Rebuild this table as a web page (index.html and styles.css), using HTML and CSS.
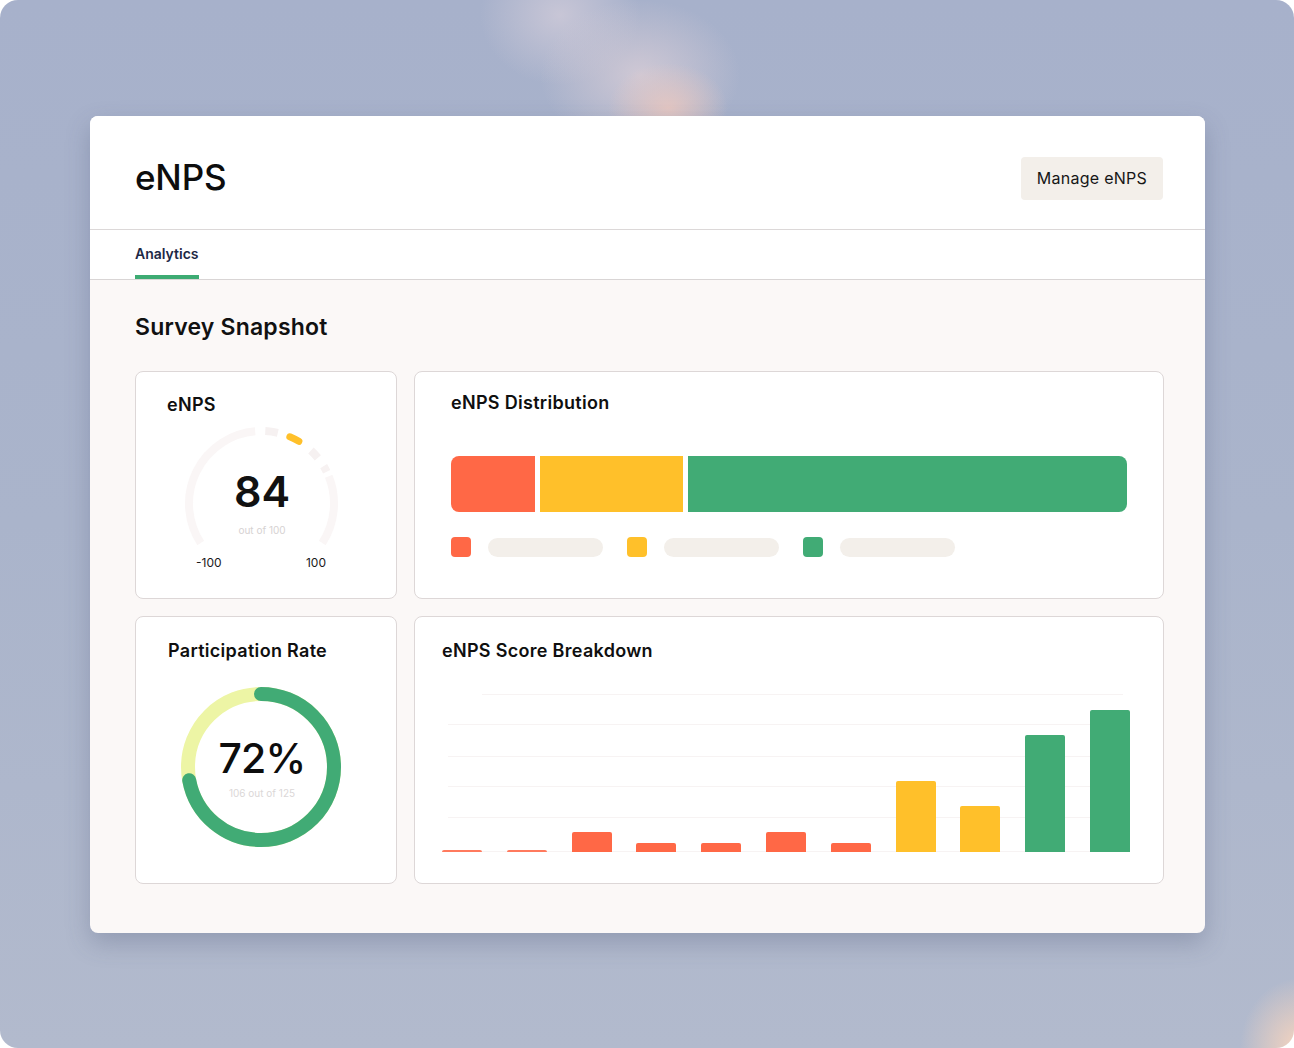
FILE: index.html
```html
<!DOCTYPE html>
<html>
<head>
<meta charset="utf-8">
<link rel="stylesheet" href="styles.css">
</head>
<body>
<div class="frame">
  <div class="panel">
    <header class="header">
      <h1 class="title">eNPS</h1>
      <button class="btn">Manage eNPS</button>
    </header>
    <nav class="tabs">
      <div class="tab active">Analytics</div>
    </nav>
    <main class="content">
      <h2 class="section-title">Survey Snapshot</h2>
      <div class="grid">
        <section class="card card-enps">
          <h3 class="card-title">eNPS</h3>
          <div class="gauge">
            <svg class="gauge-svg" width="190" height="130" viewBox="0 0 190 130">
              <path d="M33.7 120.98 A72.5 72.5 0 0 1 88.18 9.28" fill="none" stroke="#faf6f6" stroke-width="8"/>
              <path d="M98.29 9.10 A72.5 72.5 0 0 1 110.81 10.86" fill="none" stroke="#f6f1f1" stroke-width="8"/>
              <path d="M143.95 28.47 A72.5 72.5 0 0 1 150.84 35.88" fill="none" stroke="#f6f1f1" stroke-width="8"/>
              <path d="M156.65 44.16 A72.5 72.5 0 0 1 159.66 49.72" fill="none" stroke="#f7f2f2" stroke-width="8"/>
              <path d="M161.72 54.34 A72.5 72.5 0 0 1 155.3 120.98" fill="none" stroke="#faf6f6" stroke-width="8"/>
              <path d="M122.83 14.76 A72.5 72.5 0 0 1 131.84 19.35" fill="none" stroke="#ffc02a" stroke-width="7" stroke-linecap="round"/>
            </svg>
            <div class="gauge-value">84</div>
            <div class="gauge-sub">out of 100</div>
            <div class="gauge-labels"><span>-100</span><span>100</span></div>
          </div>
        </section>

        <section class="card card-dist">
          <h3 class="card-title">eNPS Distribution</h3>
          <div class="dist-bar">
            <div class="seg seg-red"></div>
            <div class="seg seg-yellow"></div>
            <div class="seg seg-green"></div>
          </div>
          <div class="legend">
            <div class="legend-item"><span class="swatch red"></span><span class="pill"></span></div>
            <div class="legend-item"><span class="swatch yellow"></span><span class="pill"></span></div>
            <div class="legend-item"><span class="swatch green"></span><span class="pill"></span></div>
          </div>
        </section>

        <section class="card card-part">
          <h3 class="card-title">Participation Rate</h3>
          <div class="donut">
            <svg class="donut-svg" width="160" height="160" viewBox="0 0 160 160">
              <circle cx="80" cy="80" r="73" fill="none" stroke="#edf5a5" stroke-width="14"/>
              <circle cx="80" cy="80" r="73" fill="none" stroke="#41ab75" stroke-width="14" stroke-linecap="round" stroke-dasharray="330.2 458.7" transform="rotate(-90 80 80)"/>
            </svg>
            <div class="donut-text">
              <div class="donut-value">72%</div>
              <div class="donut-sub">106 out of 125</div>
            </div>
          </div>
        </section>

        <section class="card card-break">
          <h3 class="card-title">eNPS Score Breakdown</h3>
          <div class="chart">
            <div class="bar red light" style="height:2px"></div>
            <div class="bar red light" style="height:2px"></div>
            <div class="bar red" style="height:20px"></div>
            <div class="bar red" style="height:9px"></div>
            <div class="bar red" style="height:9px"></div>
            <div class="bar red" style="height:20px"></div>
            <div class="bar red" style="height:9px"></div>
            <div class="bar yellow" style="height:71px"></div>
            <div class="bar yellow" style="height:46px"></div>
            <div class="bar green" style="height:117px"></div>
            <div class="bar green" style="height:142px"></div>
          </div>
        </section>
      </div>
    </main>
  </div>
</div>
</body>
</html>
```

FILE: styles.css
```css
* { box-sizing: border-box; }
html, body { margin: 0; padding: 0; background: #ffffff; }
body { font-family: "Inter", "Noto Sans", sans-serif; color: #111; }

.frame {
  width: 1294px;
  height: 1048px;
  border-radius: 18px;
  overflow: hidden;
  padding: 116px 89px 0 90px;
  background:
    radial-gradient(ellipse 60px 70px at 1300px 1048px, rgba(250,214,190,0.95), rgba(250,214,190,0) 100%),
    radial-gradient(ellipse 60px 45px at 668px 108px, rgba(234,200,192,0.85), rgba(234,200,192,0) 100%),
    radial-gradient(ellipse 100px 75px at 640px 75px, rgba(214,204,214,0.85), rgba(214,204,214,0) 100%),
    radial-gradient(ellipse 80px 70px at 560px 15px, rgba(208,203,217,0.8), rgba(208,203,217,0) 100%),
    linear-gradient(180deg, #a7b1cb 0%, #aab4cb 50%, #b2bacd 100%);
}

.panel {
  width: 1115px;
  height: 817px;
  border-radius: 8px;
  overflow: hidden;
  background: #fbf8f7;
  box-shadow: 0 10px 24px rgba(70, 80, 110, 0.28);
  display: flex;
  flex-direction: column;
}

.header {
  height: 114px;
  background: #fff;
  display: flex;
  align-items: center;
  justify-content: space-between;
  padding: 9px 42px 0 45px;
  border-bottom: 1px solid #dcd8d8;
}
.title {
  margin: 0;
  font-size: 35px;
  font-weight: 500;
  letter-spacing: -0.2px;
  color: #0d0d0d;
}
.btn {
  height: 43px;
  margin-top: 2px;
  padding: 0 16px;
  border: none;
  border-radius: 4px;
  background: #f3efea;
  font-family: "Inter", sans-serif;
  font-size: 16px;
  letter-spacing: 0.25px;
  color: #161616;
}

.tabs {
  height: 50px;
  background: #fff;
  padding: 0 45px;
  display: flex;
  align-items: flex-end;
  border-bottom: 1px solid #d9d5d5;
}
.tab {
  font-size: 14px;
  font-weight: 600;
  color: #1d2845;
  padding-bottom: 13px;
  border-bottom: 4px solid #3dab73;
}

.content {
  flex: 1;
  padding: 0 41px 0 45px;
}
.section-title {
  margin: 33px 0 30px;
  font-size: 23px;
  line-height: 28px;
  font-weight: 600;
  letter-spacing: 0.2px;
  color: #111;
}

.grid {
  display: grid;
  grid-template-columns: 262px 750px;
  grid-template-rows: 228px 268px;
  column-gap: 17px;
  row-gap: 17px;
}

.card {
  background: #fff;
  border: 1px solid #ddd7d7;
  border-radius: 8px;
}
.card-title {
  margin: 0;
  font-size: 18px;
  line-height: 22px;
  font-weight: 600;
  letter-spacing: 0.3px;
  color: #0f0f0f;
}

/* eNPS gauge */
.card-enps { padding: 22px 32px 0 31px; }
.gauge {
  position: relative;
  width: 190px;
  height: 150px;
  margin-top: 6px;
  text-align: center;
}
.gauge-svg { position: absolute; left: 0; top: 0; }
.gauge-value {
  position: relative;
  padding-top: 48px;
  font-size: 43px;
  line-height: 43px;
  font-weight: 600;
  color: #111;
}
.gauge-sub {
  position: relative;
  margin-top: 11px;
  font-size: 10px;
  line-height: 12px;
  color: #d6d2d2;
}
.gauge-labels {
  position: relative;
  display: flex;
  justify-content: space-between;
  margin-top: 20px;
  padding: 0 31px 0 29px;
  font-size: 12px;
  line-height: 14px;
  color: #1a1a1a;
}

/* Distribution */
.card-dist { padding: 20px 36px 0 36px; }
.dist-bar {
  display: flex;
  gap: 5px;
  height: 56px;
  margin-top: 42px;
}
.seg { height: 100%; }
.seg-red { width: 84px; background: #ff6846; border-radius: 8px 0 0 8px; }
.seg-yellow { width: 143px; background: #ffc02a; }
.seg-green { flex: 1; background: #41ab75; border-radius: 0 8px 8px 0; }

.legend {
  display: flex;
  gap: 24px;
  margin-top: 25px;
}
.legend-item { display: flex; align-items: center; gap: 17px; }
.swatch { width: 20px; height: 20px; border-radius: 4px; }
.swatch.red { background: #ff6846; }
.swatch.yellow { background: #ffc02a; }
.swatch.green { background: #41ab75; }
.pill { width: 115px; height: 19px; border-radius: 10px; background: #f3efea; }

/* Participation */
.card-part { padding: 23px 32px 0 32px; }
.donut {
  position: relative;
  width: 160px;
  height: 160px;
  margin: 25px 0 0 13px;
}
.donut-svg { position: absolute; left: 0; top: 0; }
.donut-text {
  position: relative;
  padding-top: 51px;
  text-align: center;
}
.donut-value {
  font-size: 41px;
  line-height: 41px;
  font-weight: 500;
  letter-spacing: -0.8px;
  color: #0d0d0d;
  padding-left: 2px;
}
.donut-sub {
  margin-top: 8px;
  font-size: 10px;
  line-height: 12px;
  color: #dbd7d7;
  padding-left: 2px;
}

/* Breakdown */
.card-break { padding: 23px 33px 0 27px; }
.chart {
  margin-top: 29px;
  height: 162px;
  display: flex;
  align-items: flex-end;
  justify-content: space-between;
  background:
    linear-gradient(#f7f3f3, #f7f3f3) 40px 3px / calc(100% - 47px) 1px no-repeat,
    linear-gradient(#f7f3f3, #f7f3f3) 6px 33px / calc(100% - 13px) 1px no-repeat,
    linear-gradient(#f7f3f3, #f7f3f3) 6px 65px / calc(100% - 13px) 1px no-repeat,
    linear-gradient(#f7f3f3, #f7f3f3) 6px 95px / calc(100% - 13px) 1px no-repeat,
    linear-gradient(#f7f3f3, #f7f3f3) 6px 126px / calc(100% - 13px) 1px no-repeat,
    linear-gradient(#f7f3f3, #f7f3f3) 6px 160px / calc(100% - 13px) 1px no-repeat;
  padding-bottom: 1px;
}
.bar { width: 40px; border-radius: 2px 2px 0 0; }
.bar.red { background: #ff6846; }
.bar.red.light { background: #ff7a5e; }
.bar.yellow { background: #ffc02a; }
.bar.green { background: #41ab75; }
```
